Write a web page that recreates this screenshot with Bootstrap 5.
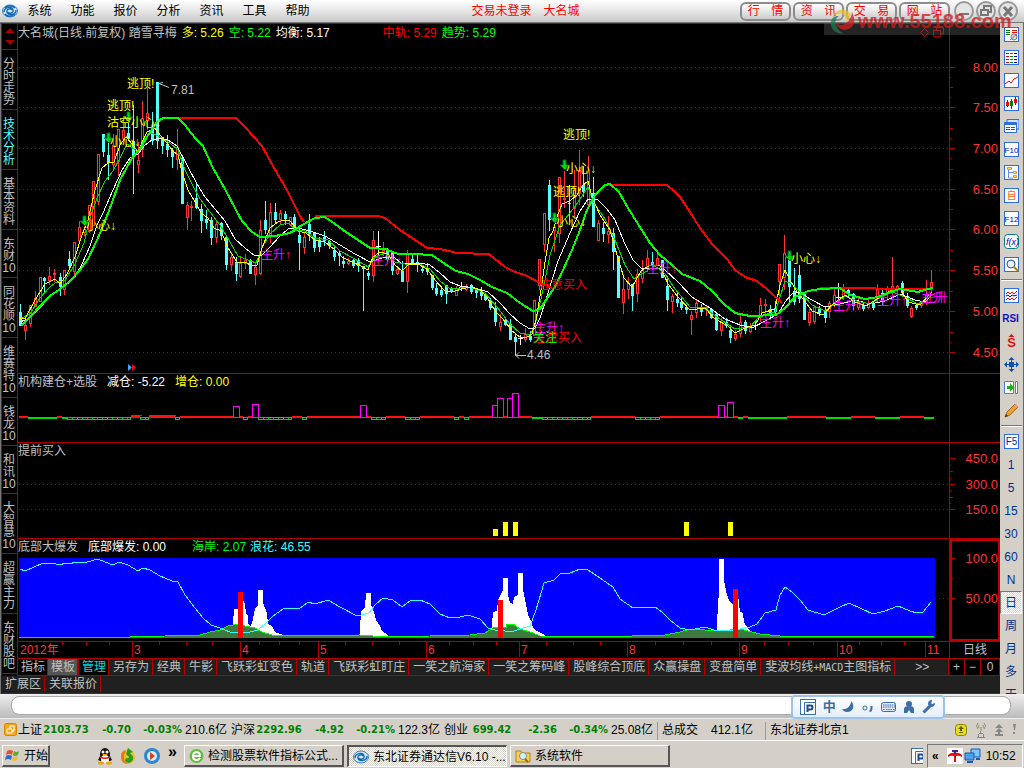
<!DOCTYPE html>
<html lang="zh-CN">
<head>
<meta charset="utf-8">
<meta name="viewport" content="width=device-width, initial-scale=1">
<title>东北证券通达信V6.10</title>
<link rel="stylesheet" href="https://cdn.jsdelivr.net/npm/bootstrap@5.3.0/dist/css/bootstrap.min.css">
<style>
:root{--line:#b00000;--face:#d4d0c8;--dim:#c0c0c0}
body{font:12px/16px "Liberation Sans","Noto Sans CJK SC",sans-serif;background:var(--face);color:#000}
button.btn{font:inherit;color:inherit;padding:0;border:0;border-radius:0;white-space:nowrap;line-height:16px}
svg{display:block;flex:none}
svg text{font-family:"Liberation Sans","Noto Sans CJK SC",sans-serif;font-size:12px}
.menubar{height:23px;background:linear-gradient(#fff,#e6e6e6 50%,#c8c8c8);border-bottom:1px solid #777;padding:0 6px 0 2px}
.menubar .menu-item{width:43px}
.menubar .pair{gap:2px}
.menubar button.cap-btn{width:51px;height:19px;border:2px solid #8c8c8c;border-radius:6px;background:linear-gradient(#fff,#ccc);color:#f00;line-height:15px}
.win-btn{width:20px;height:20px}
.desk{background:#000;border-left:1px solid #777;border-top:1px solid #333;color:var(--dim)}
.side{width:17px;border:solid var(--line);border-width:0 1px}
.side .arrows{height:26px;border-bottom:1px solid var(--line)}
.side button.btn{display:block;width:15px;white-space:normal;line-height:12px;padding:8px 1px 3px 0;border-bottom:1px solid var(--line);text-align:center}
.side button.active{color:#5ff}
.panel{border-bottom:1px solid var(--line)}
.plot{border-right:1px solid var(--line)}
.plot>svg{width:100%}
.axis{width:50px}
.legend-row{height:16px;white-space:nowrap;display:flex;gap:10px}
.legend-main{height:18px;line-height:18px;gap:5px}
.picked{border:2px solid #c00000}
.y{color:#ff0}.g{color:#0f0}.w{color:#fff}.r{color:#f00}.c{color:#3ff}
.tabs{height:17px;background:#202020;border-bottom:1px solid var(--line);overflow:hidden}
.tabs button.btn{padding:0 3px 0 4px;border-right:1px solid var(--line);height:16px}
.tabs button.tight{padding:0 2px 0 3px;background:#000}
.tabs button.chosen{background:#555}
.tabs button.manage{color:#0dd;border-left:1px solid var(--line)}
.tabs .half{font-family:"DejaVu Sans Mono";font-size:10px}
.tabs button.sq{width:16px;padding:0;background:#000}
.tabs button.sq:last-child{width:19px;flex:none}
.ext-row{height:18px}
.tool{width:24px;contain:size;overflow:hidden;border-right:1px solid #666;background:var(--face);color:#003090}
.tool button.btn{height:23px;width:22px;display:flex;align-items:center;justify-content:center;flex:none}
.tool hr{margin:3px 1px;height:2px;flex:none;border:0;border-top:1px solid #777;border-bottom:1px solid #fff;opacity:1}
.tool button.pressed{border:solid;border-width:1px;border-color:#777 #fff #fff #777;background:repeating-conic-gradient(#fff 0 25%,#d8d4cc 0 50%) 0 0/2px 2px}
.msgbar{height:24px;padding:2px 13px 3px 11px;background:linear-gradient(#eee,#bbb)}
.msgbar input{height:19px;border:1px solid #aaa;border-radius:8px;padding:0 8px;min-height:0;font-size:12px}
.ime{right:79px;top:1px;width:154px;height:24px;border:2px solid #9cc4ea;border-radius:4px;background:linear-gradient(#fff,#e4eefa);color:#3b6ea5;z-index:2}
.ime b{font-size:13px}
.status{height:22px;border-top:1px solid #eee;white-space:nowrap;overflow:hidden}
.quote{display:grid;grid-template-columns:25px 46px 42px 51px 49px;width:213px;flex:none}
.quote b{font:bold 10px/16px "DejaVu Sans",sans-serif;color:#008000;text-align:right}
.quote b.mid{text-align:center}
.quote .amt{padding-right:4px;text-align:right}
.cell{border-left:1px solid #999;padding-left:4px;margin-top:2px;height:18px}
.turnover{width:108px}
.taskbar{min-height:30px;border-top:1px solid #fff;padding:3px 1px 4px 2px}
.taskbar button.task{width:160px;height:22px;padding:0 4px;background:var(--face);border:solid;border-width:1px 2px 2px 1px;border-color:#fff #555 #555 #fff;overflow:hidden;flex:none}
.taskbar button.start{width:48px;padding:0 2px}
.taskbar button.on{border-color:#555 #fff #fff #555;border-width:2px 1px 1px 2px;background:repeating-conic-gradient(#fff 0 25%,#d8d4cc 0 50%) 0 0/2px 2px}
.quick{width:134px;padding-left:47px;gap:7px}
.quick b{font-size:16px;line-height:12px;padding-bottom:8px}
.tasks{gap:3px}
.tray{width:96px;height:24px;border:1px solid;border-color:#777 #fff #fff #777;padding-left:4px}
.watermark{right:0;top:9px;width:200px;height:26px;pointer-events:none;z-index:3}
</style>
</head>
<body class="d-flex flex-column min-vh-100 position-relative overflow-x-hidden">

<header class="menubar d-flex align-items-center">
  <svg width="16" height="16" viewBox="0 0 16 16" fill="none"><ellipse cx="8" cy="8" rx="7.500" ry="6" fill="#cfe6f7" stroke="#2c7fc4"/><path d="M2 9c0-5 8-6 9-2 1 3-4 4-5 2M14 7c0 5-8 6-9 2-1-3 4-4 5-2M3 5c2-3 7-3 10 0M3 11c2 3 7 3 10 0" stroke="#1268b3" stroke-width="1.400"/></svg>
  <nav class="d-flex">
    <button class="btn menu-item">系统</button><button class="btn menu-item">功能</button><button class="btn menu-item">报价</button><button class="btn menu-item">分析</button><button class="btn menu-item">资讯</button><button class="btn menu-item">工具</button><button class="btn menu-item">帮助</button>
  </nav>
  <div class="r d-flex flex-grow-1 justify-content-center gap-2 pe-2"><span class="me-1">交易未登录</span><span>大名城</span></div>
  <div class="d-flex pair align-items-center">
    <button class="btn cap-btn d-flex justify-content-around">行<span>情</span></button><button class="btn cap-btn d-flex justify-content-around">资<span>讯</span></button><button class="btn cap-btn d-flex justify-content-around">交<span>易</span></button><button class="btn cap-btn d-flex justify-content-around">网<span>站</span></button>
  </div>
  <div class="d-flex pair ms-1">
    <button class="btn win-btn" aria-label="最小化"><svg width="20" height="20" fill="none"><circle cx="10" cy="10" r="9" fill="#e4e4e4" stroke="#999" stroke-width="2"/><path d="M5 13h10" stroke="#777" stroke-width="2"/></svg></button>
    <button class="btn win-btn" aria-label="还原"><svg width="20" height="20" fill="none"><circle cx="10" cy="10" r="9" fill="#e4e4e4" stroke="#999" stroke-width="2"/><path d="M8 8V5h7v6h-3M5 9h7v5H5z" stroke="#777" stroke-width="2"/></svg></button>
    <button class="btn win-btn" aria-label="关闭"><svg width="20" height="20" fill="none"><circle cx="10" cy="10" r="9" fill="#e4e4e4" stroke="#999" stroke-width="2"/><path d="M6 6l8 9M14 6l-8 9" stroke="#777" stroke-width="3"/></svg></button>
  </div>
</header>

<main class="d-flex">
  <div class="desk flex-grow-1 d-flex flex-column overflow-hidden">
    <div class="d-flex">
      <nav class="side flex-shrink-0">
        <div class="arrows"><svg width="15" height="25" fill="#a00000"><path d="M8 4l5 5H3zM8 21l5-5H3z"/></svg></div>
        <button class="btn">分时走势</button><button class="btn active">技术分析</button><button class="btn">基本资料</button><button class="btn">东财10</button><button class="btn">同花顺10</button><button class="btn">维赛特10</button><button class="btn">钱龙10</button><button class="btn">和讯10</button><button class="btn">大智慧10</button><button class="btn">超赢主力</button><button class="btn">东财股吧</button>
      </nav>
      <div class="flex-grow-1 overflow-hidden">
        <section class="panel d-flex">
          <div class="plot flex-grow-1">
            <div class="legend-row legend-main">
              <span>大名城(日线.前复权) 踏雪寻梅</span><span class="y">多: 5.26</span><span class="g">空: 5.22</span><span class="w me-5">均衡: 5.17</span><span class="r">中轨: 5.29</span><span class="g">趋势: 5.29</span>
              <svg class="ms-auto me-1" width="26" height="18" fill="none" stroke="#b00000"><path d="M5.500 4.500l4 4-4 4-4-4zM14.500 6.500h7v6h-7zM17.500 6v-2.500h7v6h-3"/></svg>
            </div>
            <svg id="main" height="331" viewBox="18 42 931 331" preserveAspectRatio="xMinYMin meet" fill="none"></svg>
          </div>
          <div class="axis"><svg id="ax1" width="50" height="349" viewBox="950 24 50 349"></svg></div>
        </section>
        <section class="panel d-flex">
          <div class="plot flex-grow-1">
            <div class="legend-row"><span>机构建仓+选股</span><span class="w">减仓: -5.22</span><span class="y">增仓: 0.00</span></div>
            <svg id="vol" height="52" viewBox="18 390 931 52" preserveAspectRatio="xMinYMin meet" fill="none" shape-rendering="crispEdges"></svg>
          </div>
          <div class="axis"></div>
        </section>
        <section class="panel d-flex">
          <div class="plot flex-grow-1">
            <div class="legend-row">提前买入</div>
            <svg id="buy" height="79" viewBox="18 459 931 79" preserveAspectRatio="xMinYMin meet" shape-rendering="crispEdges"></svg>
          </div>
          <div class="axis"><svg id="ax3" width="50" height="95" viewBox="950 443 50 95"></svg></div>
        </section>
        <section class="panel d-flex">
          <div class="plot flex-grow-1">
            <div class="legend-row"><span>底部大爆发</span><span class="w me-3">底部爆发: 0.00</span><span class="d-flex gap-1"><span class="g">海岸: 2.07</span><span class="c">浪花: 46.55</span></span></div>
            <svg id="burst" height="86" viewBox="18 555 931 86" preserveAspectRatio="xMinYMin meet" fill="none"></svg>
          </div>
          <div class="axis picked"><svg id="ax4" width="46" height="98" viewBox="952 541 46 98"></svg></div>
        </section>
        <section class="panel d-flex">
          <div class="plot flex-grow-1"><svg id="dates" height="15" viewBox="18 642 931 15" preserveAspectRatio="xMinYMin meet"></svg></div>
          <div class="axis text-center">日线</div>
        </section>
        <nav class="tabs d-flex">
          <button class="btn tight">指标</button><button class="btn tight chosen">模板</button><button class="btn tight manage">管理</button><button class="btn">另存为</button><button class="btn">经典</button><button class="btn">牛影</button><button class="btn">飞跃彩虹变色</button><button class="btn">轨道</button><button class="btn">飞跃彩虹盯庄</button><button class="btn">一笑之航海家</button><button class="btn">一笑之筹码峰</button><button class="btn">股峰综合顶底</button><button class="btn">众赢操盘</button><button class="btn">变盘简单</button><button class="btn">斐波均线<span class="half">+MACD</span>主图指标</button><button class="btn flex-grow-1">&gt;&gt;</button><button class="btn sq">+</button><button class="btn sq">−</button><button class="btn sq">0</button>
        </nav>
      </div>
    </div>
    <nav class="tabs ext-row d-flex"><button class="btn">扩展区</button><button class="btn">关联报价</button></nav>
  </div>
  <aside class="tool d-flex flex-column flex-shrink-0" id="tool"></aside>
</main>

<div class="msgbar position-relative">
  <input class="form-control" type="text" aria-label="消息">
  <div class="ime position-absolute d-flex align-items-center justify-content-around px-1">
    <svg width="16" height="16"><use href="#pbox"/></svg>
    <b>中</b>
    <svg width="14" height="14" fill="#3b6ea5"><path d="M9 1c4 4 3 11-4 11-2 0-4-1-5-3 5 1 9-3 9-8z"/></svg>
    <svg width="12" height="14" fill="none" stroke="#3b6ea5"><circle cx="3" cy="8" r="2"/><path d="M9.500 6v2c0 2-1 3-2 3" stroke-width="2"/></svg>
    <svg width="16" height="12" fill="none"><rect x=".5" y="1.500" width="14" height="9" rx="2" fill="#dfeaf6" stroke="#3b6ea5"/><path d="M2 4h12M2 6h12M2 8.500h2M5 8.500h6M12 8.500h2" stroke="#3b6ea5" stroke-dasharray="1.500 .7"/></svg>
    <svg width="12" height="14" fill="#3b6ea5"><circle cx="6" cy="4" r="3"/><path d="M1 13V9q0-3 5-3t5 3v4H8l-2-3-2 3z"/></svg>
    <svg width="14" height="14" fill="none"><path d="M1.500 12.500L8 6" stroke="#3b6ea5" stroke-width="3"/><path d="M12.500 3.500a3 3 0 1 1-3-3l-1 3 2 1z" fill="#3b6ea5" stroke="#3b6ea5"/></svg>
  </div>
</div>

<footer class="status d-flex align-items-center">
  <svg class="ms-1" width="14" height="14"><rect x=".5" y=".5" width="12" height="12" rx="2" fill="#f5a81c" stroke="#d78400"/><path d="M3 6h5v4H3zM6 6V3h4v5H8" fill="none" stroke="#fff"/></svg>
  <div class="quote"><span>上证</span><b class="mid">2103.73</b><b>-0.70</b><b>-0.03%</b><span class="amt">210.6亿</span></div>
  <div class="quote"><span>沪深</span><b class="mid">2292.96</b><b>-4.92</b><b>-0.21%</b><span class="amt">122.3亿</span></div>
  <div class="quote"><span>创业</span><b class="mid">699.42</b><b>-2.36</b><b>-0.34%</b><span class="amt">25.08亿</span></div>
  <div class="cell turnover d-flex justify-content-between pe-2"><span>总成交</span><span class="pe-1">412.1亿</span></div>
  <div class="cell flex-grow-1">东北证券北京1</div>
  <div class="d-flex align-items-center gap-2 pe-2">
    <svg width="12" height="14"><rect x=".5" y="1.500" width="11" height="11" rx="3" fill="#e8dc20" stroke="#8a8000"/><path d="M6 3l3 3H7v2H5V6H3zM4 9h4v1H4z" fill="#665c00"/></svg>
    <svg width="12" height="16" fill="none" stroke="#999270"><path d="M6 5v4M3 1Q0 4 3 7M9 1q3 3 0 6M4 3q-1 1 0 3M8 3q1 1 0 3"/><path d="M5.500 9v2M4 11.500h4M3.500 12v3M8.500 12v3M2 15.500h8" stroke="#888"/></svg>
    <svg width="9" height="14" fill="#888"><path d="M4 1l4 4H0zM4 5l4 4H0zM3 9h2v2h3v2H0v-2h3z"/></svg>
    <svg width="4" height="14" fill="#888"><path d="M1 1h3L3 7H2zM1 9h2v2H1z"/></svg>
  </div>
</footer>

<div class="taskbar d-flex align-items-center flex-grow-1">
  <button class="btn task start d-flex align-items-center gap-1"><svg width="15" height="15"><path d="M2 3q3-2 6 0L7 7Q4 5 1 7z" fill="#e8502c"/><path d="M9 3q3 2 5 0l-1 4q-3 2-5 0z" fill="#5cae31"/><path d="M1 8q3-2 6 0l-1 4q-3-2-6 0z" fill="#2f68d8"/><path d="M8 8q3 2 5 0l-1 4q-3 2-5 0z" fill="#f4bd20"/></svg>开始</button>
  <div class="quick d-flex align-items-center">
    <svg width="16" height="18"><path d="M3 9Q3 1 8 1t5 8l2 4-2 1H3l-2-1z" fill="#111"/><ellipse cx="8" cy="12" rx="4" ry="4" fill="#fff"/><path d="M3 9q5 3 10 0v2q-5 2-10 0z" fill="#e01818"/><ellipse cx="4" cy="16" rx="3" ry="1.500" fill="#f5a000"/><ellipse cx="12" cy="16" rx="3" ry="1.500" fill="#f5a000"/><circle cx="6" cy="5" r="1.500" fill="#fff"/><circle cx="10" cy="5" r="1.500" fill="#fff"/><path d="M5 7h6l-3 2z" fill="#f5a000"/></svg>
    <svg width="16" height="18"><circle cx="8" cy="10" r="7" fill="#f0c020"/><path d="M1 9q0-5 5-6l-2 6q-1 5 4 8-7 0-7-8z" fill="#e87818"/><path d="M8 1l5 4-3 1q7 6-1 10-6-1-3-5 3 1 3-1L6 7z" fill="#2a9c20"/></svg>
    <svg width="18" height="18"><circle cx="9" cy="9" r="8" fill="#2a86d0"/><circle cx="9" cy="9" r="5" fill="#d7ecfb"/><path d="M7 5l5 4-5 4z" fill="#d84020"/></svg>
    <b>»</b>
  </div>
  <div class="tasks d-flex">
  <button class="btn task d-flex align-items-center gap-1"><svg width="15" height="16" fill="none"><circle cx="7.500" cy="8" r="7" fill="#63bd3e"/><path d="M4 8h7c0-5-7-5-7 0s5 5 7 2" stroke="#fff" stroke-width="2"/></svg>检测股票软件指标公式...</button>
  <button class="btn task on d-flex align-items-center gap-1"><svg width="16" height="16" viewBox="0 0 16 16" fill="none"><ellipse cx="8" cy="8" rx="7.500" ry="6" fill="#cfe6f7" stroke="#2c7fc4"/><path d="M2 9c0-5 8-6 9-2 1 3-4 4-5 2M14 7c0 5-8 6-9 2-1-3 4-4 5-2" stroke="#1268b3" stroke-width="1.400"/></svg>东北证券通达信V6.10 -...</button>
  <button class="btn task d-flex align-items-center gap-1"><svg width="16" height="14"><path d="M1 2h5l1 2h8v9H1z" fill="#f5cf52" stroke="#b5820a"/><circle cx="8" cy="7" r="3.500" fill="#d5efff" stroke="#888"/><path d="M10 10l3 3" stroke="#a60" stroke-width="2"/></svg>系统软件</button>
  </div>
  <svg class="ms-auto me-1" width="12" height="16" viewBox="0 0 12 16"><defs><g id="pbox"><rect x=".5" y=".5" width="15" height="15" fill="#fff" stroke="#3b6ea5"/><path d="M4.500 15V3.500H15" fill="none" stroke="#3b6ea5"/><path d="M7.500 13V6.500h3q2 0 2 2t-2 2h-3" fill="none" stroke="#1c4c8c" stroke-width="2"/></g></defs><use href="#pbox"/></svg>
  <div class="tray d-flex align-items-center"><b>«</b>
    <svg class="ms-2" width="17" height="16"><path fill="#fff" d="M0 0h16v16H0z"/><path fill="#e01010" d="M1 7q3-3 7-2 4-1 7 2v2q-3-2-6-1v6H7V8Q4 7 1 9z"/><path fill="#4a2090" d="M5 2h6v2H5zM7 4h2v2H7z"/></svg>
    <svg width="18" height="18" stroke="#1f58a8"><path d="M7 2h9v8H7z" fill="#7cc4ff"/><path d="M1 6h9v7H1z" fill="#4ba0f0"/><path d="M3 15h6M12 12h4" stroke-width="2"/></svg>
    <span class="ms-1">10:52</span></div>
</div>

<svg class="watermark position-absolute" viewBox="824 9 200 26"><path d="M824 23h176v12H824z" fill="#777" opacity=".3"/><g opacity=".75"><path d="M832 17Q839 6 848 11q6 5-3 12 2-7-3-9-5-1-10 3z" fill="#e8c030"/><path d="M852 12q7 15-7 18-8-1-9-7 5 4 10 0 5-3 6-11z" fill="#d02020"/><path d="M844 34q-14-1-13-12 1-7 8-6-5 3-3 9 2 6 8 9z" fill="#207850"/></g><text x="858" y="28" fill="#d01818" opacity=".75" style="font-size:20px;font-weight:bold">www.55188.com</text></svg>

<script src="https://cdn.jsdelivr.net/npm/bootstrap@5.3.0/dist/js/bootstrap.bundle.min.js"></script>
<script>
const put=(id,s)=>document.getElementById(id).innerHTML=s;
const line=(pts,color,w=1)=>`<polyline points="${pts}" stroke="${color}" stroke-width="${w}" shape-rendering="crispEdges"/>`;
const dots=(ys,x1=19)=>ys.map(y=>`<path d="M${x1} ${y}.5H949" stroke="#b00000" stroke-dasharray="1 3" shape-rendering="crispEdges"/>`).join('');
const label=(x,y,t,c)=>`<text x="${x}" y="${y}" fill="${c}">${t}</text>`;

// candles: kind x high low bodyTop bodyBottom (c = falling, r = rising, w = flat)
const candles=`c20 304 326 312 326,r25 315 340 325 331,r30 305 327 305 324,r35 291 307 298 307,r40 277 302 277 302,c44 277 293 278 281,r49 267 285 276 281,r54 269 282 273 275,c60 273 296 277 287,r64 270 295 270 290,c69 251 269 259 266,r74 242 275 242 272,r79 221 243 227 241,r84 225 236 229 233,r89 205 233 205 232,r93 181 226 181 226,r98 154 205 154 202,c103 134 157 134 152,c108 142 180 155 163,r113 134 171 145 165,r118 129 176 129 162,r123 116 140 130 139,c128 123 141 133 138,c133 105 194 141 156,r138 142 173 160 165,r142 101 157 118 150,r147 88 130 113 121,c152 112 145 128 141,c157 82 149 82 141,c162 137 154 137 146,c167 135 157 144 150,c172 148 168 150 157,r177 129 170 147 160,c182 158 204 158 204,r187 202 230 205 218,r191 201 221 206 208,c196 183 209 198 208,c201 204 233 209 221,c206 210 229 219 223,c211 217 245 220 238,r216 220 243 224 238,c221 222 240 223 236,c226 237 270 237 265,r231 252 271 257 265,c236 257 281 262 274,r240 258 278 263 277,r245 254 269 260 264,c250 259 274 260 274,r255 263 285 267 275,r260 220 275 230 274,c265 201 234 220 230,r270 203 243 212 236,c275 203 224 212 220,r280 210 225 213 220,c285 211 225 214 219,r290 217 225 217 225,c294 214 232 217 231,c299 225 270 235 243,r304 232 254 237 248,c309 214 241 224 235,c314 232 252 233 248,c319 237 252 240 247,c324 231 246 237 241,c329 240 249 241 246,c334 246 261 250 257,c339 251 266 253 256,c343 256 268 261 264,r348 258 265 261 264,c353 258 268 260 266,c358 258 272 260 266,c363 266 311 266 269,c368 271 280 273 276,r373 231 282 240 276,w378 231 255 246 247,r383 242 256 250 254,c387 248 262 250 260,c392 252 275 252 271,r397 266 275 269 274,c402 261 282 271 282,r407 250 293 253 282,c412 255 265 259 264,c417 255 272 262 265,c422 267 273 269 271,c427 263 275 269 272,c432 275 290 275 288,c436 283 296 288 294,c441 288 297 290 295,c446 285 304 285 294,c451 287 293 288 291,r456 286 296 288 296,w461 282 291 287 288,r466 284 291 286 290,c471 284 294 285 292,c476 288 298 290 293,c481 287 300 290 296,c485 293 301 295 300,c490 298 310 300 308,c495 302 326 308 322,r500 314 331 322 327,c505 317 326 320 325,c510 319 340 324 340,c515 334 356 337 342,w520 335 345 338 339,r525 328 342 334 340,c530 331 342 336 340,r534 300 336 300 336,r539 259 290 259 286,r544 213 252 213 245,c549 180 231 185 220,r554 224 252 227 231,r559 177 243 177 234,r564 171 208 198 200,c569 185 222 203 204,r574 170 217 190 209,r579 150 205 170 194,c583 166 197 185 192,r588 156 205 172 205,c593 177 227 193 227,r598 220 241 223 241,c603 222 242 228 234,r608 216 243 231 235,c613 228 270 233 252,c618 256 298 256 298,r623 274 314 289 303,r628 277 299 283 290,c632 284 311 284 296,r637 269 302 274 294,r642 260 283 270 279,r647 250 272 258 268,c652 252 270 262 266,r657 252 266 258 266,c662 260 278 260 278,c667 276 311 286 300,r672 294 313 296 302,c677 293 307 299 303,c681 297 310 302 308,c686 306 314 307 310,r691 311 335 315 320,r696 300 318 303 313,c701 304 316 308 312,r706 305 316 307 310,c711 308 319 309 318,c716 312 331 314 330,r721 318 336 322 331,c726 318 328 322 326,c730 327 343 330 338,r735 330 341 334 339,r740 315 337 322 334,c745 320 334 322 331,r750 323 333 326 332,w755 320 330 325 326,r760 298 322 305 316,r765 299 317 304 306,c770 305 317 309 315,c775 301 316 308 312,r779 264 296 264 282,r784 235 290 253 278,c789 258 305 260 287,c794 268 305 291 302,c799 265 303 275 299,c804 294 320 294 320,r809 308 326 312 323,r814 305 324 307 322,c819 306 316 309 313,c825 306 323 310 318,r829 301 318 303 312,r834 288 307 295 303,w838 283 302 297 298,r843 284 300 287 297,c848 288 297 290 293,c853 293 310 294 306,r858 298 310 302 308,c863 302 311 305 309,r868 297 309 304 308,c873 301 310 304 308,r877 284 303 289 299,c882 289 305 293 300,r887 286 300 289 293,r892 257 295 286 290,r897 285 296 286 289,c902 281 297 283 293,c907 293 308 296 306,r911 306 318 308 317,c916 303 310 305 308,r921 302 308 303 306,r926 280 305 295 302,r931 270 293 282 288`.split(',').map(s=>{
  const k=s[0],[x,h,l,t,b]=s.slice(1).split(' ').map(Number),c={c:'#5ff',r:'#f33',w:'#fff'}[k];
  const body=k==='r'?`<rect x="${x-.5}" y="${t+.5}" width="2" height="${Math.max(b-t-1,1)}" fill="#000" stroke="${c}"/>`:k==='w'?`<path d="M${x-2} ${t}.5h5" stroke="${c}"/>`:`<path d="M${x-1} ${t}h3V${b}h-3z" fill="${c}"/>`;
  return `<path d="M${x}.5 ${h}V${l}" stroke="${c}"/>`+body;}).join('');

const white='20,322 30,318 40,308 50,296 55,292 65,286 75,277 82,264 90,246 97,225 103,213 113,190 122,170 130,158 138,154 145,145 152,140 160,138 168,140 177,146 187,165 197,184 205,197 215,209 225,221 235,239 245,248 255,256 262,255 270,247 280,236 288,229 298,228 310,231 325,236 340,245 355,254 370,262 385,257 395,258 402,264 420,263 430,265 440,273 450,282 460,286 475,288 488,292 500,303 510,314 520,323 530,329 535,328 540,318 548,293 558,261 570,233 580,211 588,199 597,199 607,209 615,220 625,244 633,260 641,268 655,268 665,270 678,282 692,297 710,308 725,319 740,325 752,328 765,321 778,314 785,302 792,294 800,292 810,299 825,307 840,304 855,300 870,304 885,301 900,294 915,300 925,302 932,295';
const yellow='20,318 25,319 35,300 45,284 55,279 60,284 67,274 75,257 82,235 88,220 95,190 102,168 108,163 114,162 120,145 126,137 133,145 138,152 143,140 147,132 155,128 160,135 167,143 173,151 178,155 182,172 188,190 195,202 201,213 208,218 214,228 221,231 228,248 237,262 245,262 252,266 257,265 262,248 270,228 278,222 284,220 290,221 298,231 306,233 315,240 325,242 335,250 342,257 352,262 361,266 368,270 373,257 380,252 388,254 395,265 402,271 408,265 418,264 427,269 435,280 445,291 455,291 462,289 470,287 480,290 487,297 495,311 503,319 512,331 520,337 527,337 532,334 536,320 541,290 545,262 549,238 553,231 557,217 562,204 570,201 577,195 582,186 588,181 592,197 600,215 610,230 617,255 624,278 632,287 641,271 650,265 660,266 668,284 678,297 690,310 705,308 715,319 728,326 735,333 745,328 755,325 762,313 775,309 780,285 785,270 790,280 797,292 804,300 812,311 823,315 832,305 845,295 855,302 866,306 877,299 890,291 900,288 908,302 920,305 932,292';
const green='20,319 30,314 40,298 50,287 55,283 65,280 75,264 84,243 90,218 97,198 105,181 113,171 120,158 127,144 138,152 145,137 152,133 160,137 170,143 178,150 185,170 193,186 200,199 210,212 220,225 230,242 238,256 256,263 263,246 270,234 280,225 288,223 296,230 305,231 315,238 328,240 340,251 355,259 368,267 375,257 385,253 395,262 405,264 420,264 430,269 440,281 450,289 470,287 485,293 497,307 510,324 520,333 530,335 535,325 543,290 550,255 560,225 570,213 578,202 588,187 594,203 605,219 615,240 625,265 634,279 645,272 655,266 665,274 675,289 690,307 705,308 717,317 735,329 750,327 760,316 775,312 780,297 785,281 792,284 800,292 812,305 825,311 835,304 845,296 857,301 870,304 880,298 892,292 905,297 918,304 932,295';
const trend='21,326 30,317 40,306 50,296 60,289 70,281 80,270 88,259 97,240 103,226 110,208 120,180 132,158 140,149 150,132 157,122 163,118 178,118 185,125 195,138 203,146 213,168 225,189 236,210 242,221 252,232 260,237 275,236 290,233 302,225 315,218 325,217 335,224 343,230 355,238 370,248 385,249 398,254 413,254 432,255 445,264 456,271 468,274 480,280 492,287 507,293 520,303 533,311 540,309 548,297 556,285 563,270 572,250 580,230 587,210 595,195 605,185 610,184 619,192 628,208 638,224 650,243 660,255 672,265 682,274 700,281 712,291 724,304 735,313 750,316 776,315 785,308 795,297 808,291 820,289 840,288 850,295 865,299 878,297 890,292 900,289 918,292 928,289 933,288';
const mid=['178,118 236,118 245,127 262,146 273,166 288,192 300,216 304,222','315,216 378,216 385,218 400,230 427,248 440,249 457,253 489,254 505,267 515,272 525,275 540,283 552,288','609,185 667,185 675,192 680,197 690,212 700,228 712,244 727,259 735,270 745,277 757,281 768,290 782,303','820,288 932,289'];
const arrow=(x,y)=>`<path d="M${x-1} ${y-5}h3v5h3l-4 5-5-5h3z" fill="#0d0" stroke="#064"/>`;
const Y='#ff0',M='#f0f';
put('main',dots([67,107,148,189,229,270,311,352])+`<g shape-rendering="crispEdges">${candles}</g>`
 +line(white,'#fff')+line(green,'#0d0')+line(yellow,Y)+mid.map(p=>line(p,'#f00',2)).join('')+line(trend,'#0f0',2)
 +[[84,221],[108,138],[128,117],[564,165],[554,218],[789,256]].map(a=>arrow(...a)).join('')
 +[[127,88,'逃顶!'],[107,110,'逃顶!'],[107,127,'沽空'],[131,127,'小心↓'],[110,146,'小心↓'],[86,230,'小心↓'],[563,139,'逃顶!'],[553,196,'逃顶!'],[566,173,'小心↓'],[556,226,'小心↓'],[791,263,'小心↓']].map(t=>label(...t,Y)).join('')
 +[[261,259],[372,265],[534,332],[647,273],[760,327],[833,310],[877,305],[921,302],[924,302]].map(([x,y])=>label(x,y,x>920?'主升':'主升↑',M)).join('')
 +label(539,289,'注意买入','#f00')+label(534,342,'注意买入','#f00')+label(533,342,'关注','#0f0')
 +label(171,94,'7.81','#c0c0c0')+label(527,359,'4.46','#c0c0c0')
 +'<path d="M159 83.500l4-1M159 83.500l10 4M516 355.500h10M519 352.500l-3 3 3 3" stroke="#c0c0c0"/><path d="M128 364v7l4-3.500z" fill="#3af"/><path d="M132 364v7l4-3.500z" fill="red"/>');

const axis=marks=>marks.map(([y,t])=>`<path d="M950 ${y}.5h5" stroke="#b00000"/><text x="998" y="${y+5}" text-anchor="end" fill="#f33" style="font-size:13px">${t}</text>`).join('');
const minor=(a,b,n)=>{let s='';for(let i=1;i<n;i++)s+=`<path d="M950 ${Math.round(a+(b-a)*i/n)}.5h${i*2===n?3:1}" stroke="#b00000"/>`;return s};
const prices=[[67,'8.00'],[107,'7.50'],[148,'7.00'],[189,'6.50'],[229,'6.00'],[270,'5.50'],[311,'5.00'],[352,'4.50']];
put('ax1',axis(prices)+prices.slice(1).map((p,i)=>minor(prices[i][0],p[0],4)).join(''));
put('ax3',axis([[458,'450.0'],[484,'300.0'],[509,'150.0']])+minor(458,484,4)+minor(484,509,4));
put('ax4',axis([[558,'100.0'],[598,'50.00']])+minor(558,598,2));

const boxes=[[67,131],[140,149],[175,180],[243,248],[258,292],[302,307],[371,386],[405,420],[454,459],[464,469],[542,591],[635,660]];
const flats=[[28,57],[62,67],[532,542],[738,743],[748,787],[826,851],[875,900],[924,934]];
const bars=[[233,406],[252,404],[360,405],[492,405],[497,398],[507,398],[512,393],[718,405],[727,402]];
put('vol','<path d="M19 417H934" stroke="#f11" stroke-width="2"/><path d="M131 415.500h11M149 415.500h26M149.500 415v3M154.500 415v3M159.500 415v3M164.500 415v3M170.500 415v3M175.500 415v3" stroke="#f11"/>'
 +flats.map(([a,b])=>`<path d="M${a} 416H${b}" stroke="#000" stroke-width="2"/><path d="M${a} 418H${b}" stroke="#0d0" stroke-width="2"/>`).join('')
 +boxes.map(([a,b])=>{let s=`<path d="M${a} 416.500H${b}" stroke="#000"/><rect x="${a+.5}" y="417.500" width="${b-a-1}" height="2" fill="#000" stroke="#0d0"/>`;for(let x=a+5;x<b;x+=5)s+=`<path d="M${x}.5 417v2" stroke="#0d0"/>`;return s}).join('')
 +bars.map(([x,y])=>`<rect x="${x+.5}" y="${y+.5}" width="6" height="${417-y}" fill="#000" stroke="#f0f"/>`).join(''));
put('buy',dots([484,509])+[[493,529],[503,522],[513,522],[684,522],[728,522]].map(([x,y])=>`<path d="M${x} ${y}h5V536h-5z" fill="#ff0"/>`).join(''));

const foam=['233,638 233,624 234,609 238,609 238,600 243,600 245,604 246,614 248,615 248,624 251,626 253,619 255,608 258,606 258,590 263,590 263,603 267,613 268,624 272,626 275,632 283,635 283,638','360,638 360,629 361,611 365,608 366,593 371,593 371,605 375,615 376,620 380,626 382,631 388,635 388,638','492,638 492,625 493,612 497,611 498,600 503,590 503,578 508,578 508,595 510,603 513,604 514,597 518,595 518,573 523,573 523,590 526,604 528,615 532,623 533,628 537,631 545,635 545,638','717,638 717,630 718,598 719,598 719,559 724,559 724,580 727,595 730,602 733,605 738,595 740,612 743,613 744,622 748,629 753,632 753,638'];
const shore='19,637 130,637 165,636 200,635 210,632 220,630 228,626 238,624 245,626 255,628 262,632 272,635 295,636 360,635 385,637 430,636 470,635 485,633 493,628 498,627 506,628 507,624 513,624 520,629 533,633 540,636 600,637 665,635 680,632 690,629 720,631 740,629 760,634 780,636 934,636';
const wave='20,569 25,571 34,567 43,563 52,563 60,565 65,563 70,564 75,562 87,562 98,559 105,562 113,565 119,562 128,565 138,571 143,568 150,570 160,576 172,581 178,582 185,595 195,608 203,618 211,625 220,628 230,632 240,632 250,632 258,630 265,624 273,616 283,609 292,608 299,609 308,602 315,604 328,600 340,607 357,616 369,613 375,605 383,598 393,600 402,607 410,601 420,600 430,604 440,614 450,618 460,617 468,615 480,619 488,628 495,630 505,631 511,632 520,629 530,626 536,610 544,583 554,580 561,573 570,573 580,569 588,570 600,578 613,587 620,599 633,608 645,607 655,607 662,612 670,620 680,628 690,630 705,627 717,631 735,630 750,627 757,624 765,613 776,610 780,595 785,587 792,592 800,600 808,610 824,615 838,608 849,603 862,609 873,614 885,611 898,606 910,611 917,613 923,612 931,602';
put('burst',dots([598],935)+'<path d="M19 558H935V638H19z" fill="#00f"/>'+foam.map(p=>`<polygon points="${p}" fill="#fff" shape-rendering="crispEdges"/>`).join('')
 +`<polygon points="19,638 ${shore} 935,638" fill="#3d7a3d"/>`+line(shore,'#0f0')+line(wave,'#3ff')
 +[[238,592],[498,600],[733,589]].map(([x,y])=>`<path d="M${x} ${y}h5V638h-5z" fill="red"/>`).join(''));

put('dates',label(20,654,'2012年','#f33')+[[132,3],[240,4],[318,5],[426,6],[519,7],[627,8],[739,9],[837,10],[925,11]].map(([x,t])=>`<path d="M${x}.5 642v15" stroke="#b00000"/>`+label(x+2,654,t,'#f33')).join('')
 +[62,86,109,159,186,212,259,279,299,345,372,399,449,473,496,546,573,600,655,683,711,764,788,813,859,881,904].map(x=>`<path d="M${x}.5 642v3" stroke="#b00000"/>`).join(''));

// right-hand tool strip
const fr='<rect x=".5" y=".5" width="14" height="14" fill="#fff" stroke="#2a6fdc"/>';
const f=(t,c='#00c',s=8)=>fr+`<text x="7.500" y="11" text-anchor="middle" fill="${c}" style="font-size:${s}px">${t}</text>`;
const cols=(...c)=>c.map((k,i)=>`<path d="M${2+i*4} 3.500h3M${2+i*4} 6.500h3M${2+i*4} 9.500h3M${2+i*4} 12.500h3" stroke="${k}"/>`).join('');
const items=[
 ['报表',fr+'<path d="M2 3.500h4M2 5.500h4M2 7.500h4" stroke="green"/><path d="M8 3.500h5M8 5.500h5" stroke="red"/><circle cx="10" cy="10" r="3" stroke="#777" fill="#ddd"/><path d="M6 13l7-6" stroke="#777"/>'],
 ['行情列表',fr+cols('#d00','green','#00c')],['分时图',fr+'<path d="M1 11l4-3 2 2 3-4 4-2" stroke="red" fill="none"/>'],
 ['K线图',fr+'<path d="M3.500 4v7M7.500 3v10M11.500 1v8" stroke="#333"/><path d="M2 6h3v4H2zM10 3h3v4h-3z" fill="red"/><path d="M6 5h3v5H6z" fill="green"/>'],
 ['窗口','<path d="M3 .500h12V10H3z" fill="#cfe0ff" stroke="#2a6fdc"/><path d="M.5 3.500h12v10H.5z" fill="#fff" stroke="#2a6fdc"/><path d="M1 5h11" stroke="#2a6fdc" stroke-width="2"/><path d="M2 8.500h4M7 8.500h4M2 10.500h4M7 10.500h4" stroke="#555"/>'],
 ['F10',f('F10')],['板块树',fr+'<path d="M4.500 4v9H9M5 7.500h4" stroke="#68f" fill="none"/><path d="M3.500 2.500h4v2h-4zM9.500 6.500h3v2h-3zM9.500 10.500h3v2h-3z" fill="#fd6" stroke="#e90"/>'],
 ['自选',f('自','#f60',10)],['F12',f('F12')],['公式','<rect x=".5" y=".5" width="14" height="14" rx="3" fill="#fff" stroke="#087c7c"/><text x="2" y="11" fill="#00c" style="font-size:9px;font-style:italic">f(x)</text>'],
 ['查找',fr+'<circle cx="7" cy="7" r="4" stroke="#258" fill="#eef"/><path d="M10 10l4 4" stroke="#a80" stroke-width="2"/>'],0,
 ['叠加',fr+'<path d="M2 6l2-2 2 2 2-2 2 2 3-3M2 12l2-2 2 2 2-2 2 2 3-3" stroke="red" fill="none"/><path d="M2 8l2-1 2 2 2-2 2 1 3-1" stroke="#00c" fill="none"/>'],
 ['RSI','<text x="7.500" y="11" text-anchor="middle" fill="#11c" style="font-size:10px;font-weight:bold">RSI</text>'],
 ['资金','<text x="7.500" y="13" text-anchor="middle" fill="#d11" style="font-size:13px;font-weight:bold">S</text><path d="M7.500 0l3 3h-6z" fill="#d11"/>'],
 ['移动','<path d="M7.500 0l3 3h-6zM7.500 15l3-3h-6zM0 7.500l3-3v6zM15 7.500l-3-3v6zM5 5h5v5H5zM7 3h1v9H7zM3 7h9v1H3z" fill="#0b52b4"/>'],
 ['转出','<path d="M.5 1.500h9v12h-9zM11.500 1.500h2v12h-2z" fill="#fff" stroke="#48c"/><path d="M3 6h3V3l4 4.500L6 12V9H3z" fill="#2a2"/>'],
 ['画线','<path d="M1 14l2-5 8-8 3 3-8 8z" fill="#e8a23c" stroke="#a5661a"/><path d="M10 2l3 3 1-2-2-2z" fill="#e99"/><path d="M1 14l1-3 2 2z" fill="#333"/>'],0,
 ['F5',f('F5','#003090',10)],'1','5','15','30','60','N','日','周','月','多','天'];
put('tool',items.map(i=>i===0?'<hr>':typeof i==='string'?`<button class="btn${i==='日'?' pressed':''}">${i}</button>`:`<button class="btn" aria-label="${i[0]}"><svg width="${i[0]==='RSI'?22:15}" height="15"${i[0]==='RSI'?' viewBox="-3 0 22 15"':''} fill="none">${i[1]}</svg></button>`).join(''));
</script>
</body>
</html>
